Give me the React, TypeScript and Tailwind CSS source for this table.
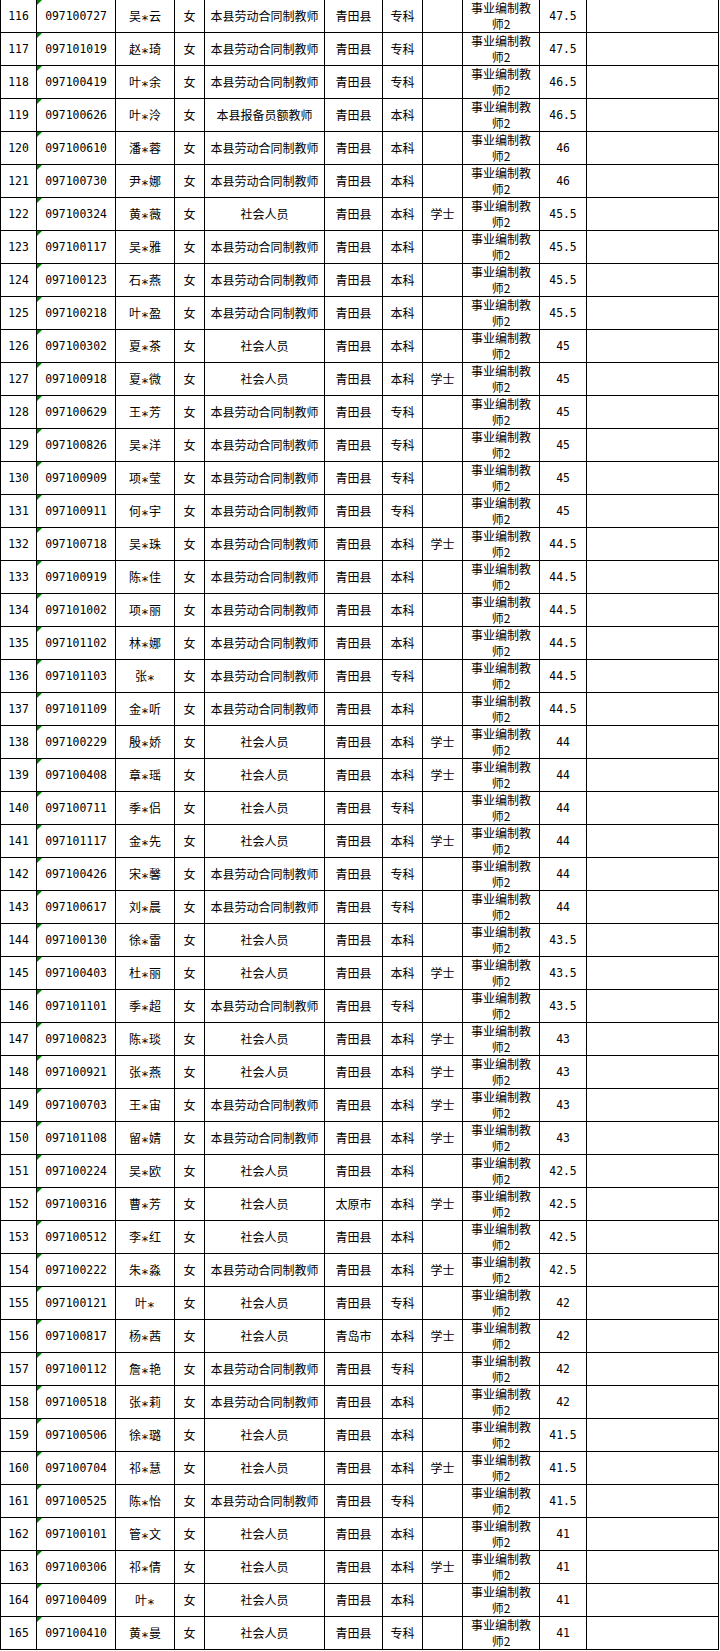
type Row = [number, string, string, string, string, string, string, string, string]

const SOCIAL = '社会人员'
const CONTRACT = '本县劳动合同制教师'
const POST = '事业编制教师2'

// seq, id, name, identity, county, education, degree, score, post
const rows: Row[] = [
  [116, '097100727', '吴*云', CONTRACT, '青田县', '专科', '', '47.5', POST],
  [117, '097101019', '赵*琦', CONTRACT, '青田县', '专科', '', '47.5', POST],
  [118, '097100419', '叶*余', CONTRACT, '青田县', '专科', '', '46.5', POST],
  [119, '097100626', '叶*泠', '本县报备员额教师', '青田县', '本科', '', '46.5', POST],
  [120, '097100610', '潘*蓉', CONTRACT, '青田县', '本科', '', '46', POST],
  [121, '097100730', '尹*娜', CONTRACT, '青田县', '本科', '', '46', POST],
  [122, '097100324', '黄*薇', SOCIAL, '青田县', '本科', '学士', '45.5', POST],
  [123, '097100117', '吴*雅', CONTRACT, '青田县', '本科', '', '45.5', POST],
  [124, '097100123', '石*燕', CONTRACT, '青田县', '本科', '', '45.5', POST],
  [125, '097100218', '叶*盈', CONTRACT, '青田县', '本科', '', '45.5', POST],
  [126, '097100302', '夏*茶', SOCIAL, '青田县', '本科', '', '45', POST],
  [127, '097100918', '夏*微', SOCIAL, '青田县', '本科', '学士', '45', POST],
  [128, '097100629', '王*芳', CONTRACT, '青田县', '专科', '', '45', POST],
  [129, '097100826', '吴*洋', CONTRACT, '青田县', '专科', '', '45', POST],
  [130, '097100909', '项*莹', CONTRACT, '青田县', '专科', '', '45', POST],
  [131, '097100911', '何*宇', CONTRACT, '青田县', '专科', '', '45', POST],
  [132, '097100718', '吴*珠', CONTRACT, '青田县', '本科', '学士', '44.5', POST],
  [133, '097100919', '陈*佳', CONTRACT, '青田县', '本科', '', '44.5', POST],
  [134, '097101002', '项*丽', CONTRACT, '青田县', '本科', '', '44.5', POST],
  [135, '097101102', '林*娜', CONTRACT, '青田县', '本科', '', '44.5', POST],
  [136, '097101103', '张*', CONTRACT, '青田县', '专科', '', '44.5', POST],
  [137, '097101109', '金*听', CONTRACT, '青田县', '本科', '', '44.5', POST],
  [138, '097100229', '殷*娇', SOCIAL, '青田县', '本科', '学士', '44', POST],
  [139, '097100408', '章*瑶', SOCIAL, '青田县', '本科', '学士', '44', POST],
  [140, '097100711', '季*侣', SOCIAL, '青田县', '专科', '', '44', POST],
  [141, '097101117', '金*先', SOCIAL, '青田县', '本科', '学士', '44', POST],
  [142, '097100426', '宋*馨', CONTRACT, '青田县', '专科', '', '44', POST],
  [143, '097100617', '刘*晨', CONTRACT, '青田县', '专科', '', '44', POST],
  [144, '097100130', '徐*雷', SOCIAL, '青田县', '本科', '', '43.5', POST],
  [145, '097100403', '杜*丽', SOCIAL, '青田县', '本科', '学士', '43.5', POST],
  [146, '097101101', '季*超', CONTRACT, '青田县', '专科', '', '43.5', POST],
  [147, '097100823', '陈*琰', SOCIAL, '青田县', '本科', '学士', '43', POST],
  [148, '097100921', '张*燕', SOCIAL, '青田县', '本科', '学士', '43', POST],
  [149, '097100703', '王*宙', CONTRACT, '青田县', '本科', '学士', '43', POST],
  [150, '097101108', '留*婧', CONTRACT, '青田县', '本科', '学士', '43', POST],
  [151, '097100224', '吴*欧', SOCIAL, '青田县', '本科', '', '42.5', POST],
  [152, '097100316', '曹*芳', SOCIAL, '太原市', '本科', '学士', '42.5', POST],
  [153, '097100512', '李*红', SOCIAL, '青田县', '本科', '', '42.5', POST],
  [154, '097100222', '朱*淼', CONTRACT, '青田县', '本科', '学士', '42.5', POST],
  [155, '097100121', '叶*', SOCIAL, '青田县', '专科', '', '42', POST],
  [156, '097100817', '杨*茜', SOCIAL, '青岛市', '本科', '学士', '42', POST],
  [157, '097100112', '詹*艳', CONTRACT, '青田县', '专科', '', '42', POST],
  [158, '097100518', '张*莉', CONTRACT, '青田县', '本科', '', '42', POST],
  [159, '097100506', '徐*璐', SOCIAL, '青田县', '本科', '', '41.5', POST],
  [160, '097100704', '祁*慧', SOCIAL, '青田县', '本科', '学士', '41.5', POST],
  [161, '097100525', '陈*怡', CONTRACT, '青田县', '专科', '', '41.5', POST],
  [162, '097100101', '管*文', SOCIAL, '青田县', '本科', '', '41', POST],
  [163, '097100306', '祁*倩', SOCIAL, '青田县', '本科', '学士', '41', POST],
  [164, '097100409', '叶*', SOCIAL, '青田县', '本科', '', '41', POST],
  [165, '097100410', '黄*曼', SOCIAL, '青田县', '专科', '', '41', POST],
]

const cell = 'flex items-center justify-center border-l border-black text-center'
const cjk = "font-['Noto_Sans_CJK_SC',sans-serif] text-[12px] leading-[16px]"
const mono = "font-['DejaVu_Sans_Mono','Noto_Sans_CJK_SC',monospace] text-[11.4px] leading-[16px]"

// masked names: the star sits mid-height like the bitmap font in the sheet
function MaskedName({ name }: { name: string }) {
  const [first, rest] = name.split('*')
  return (
    <span className="whitespace-nowrap">
      {first}
      <span className="inline-block w-[8px] translate-y-[3px] text-center font-['DejaVu_Sans_Mono',monospace] text-[13px]">*</span>
      {rest}
    </span>
  )
}

export default function App() {
  return (
    <div className="min-h-[1651px] w-[720px] bg-white text-black">
      <div className="w-[719px]">
        {rows.map(([seq, id, name, identity, county, edu, degree, score, post]) => (
          <div key={seq}
               className="grid h-[33px] grid-cols-[36px_79px_59px_30px_120px_58px_40px_40px_77px_47px_133px] border-b border-black">
            <div className={`${cell} ${mono}`}>{seq}</div>
            <div className={`${cell} ${mono} relative`}>
              {/* excel "number stored as text" marker */}
              <svg className="absolute left-0 top-0" width="5" height="5" viewBox="0 0 5 5">
                <polygon points="0,0 5,0 0,5" fill="#008000" />
              </svg>
              {id}
            </div>
            <div className={`${cell} ${cjk}`}><MaskedName name={name} /></div>
            <div className={`${cell} ${cjk}`}>女</div>
            <div className={`${cell} ${cjk}`}>{identity}</div>
            <div className={`${cell} ${cjk}`}>{county}</div>
            <div className={`${cell} ${cjk}`}>{edu}</div>
            <div className={`${cell} ${cjk}`}>{degree}</div>
            <div className={`${cell} ${cjk} px-[6px]`}>{post}</div>
            <div className={`${cell} ${mono}`}>{score}</div>
            <div className={`${cell} border-r`}></div>
          </div>
        ))}
      </div>
    </div>
  )
}
